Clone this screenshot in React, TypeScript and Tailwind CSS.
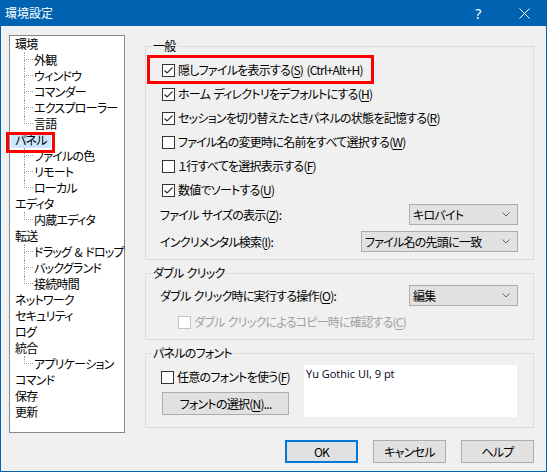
import React from 'react';

type TreeNode = { label: string; selected?: boolean; children?: string[] };

// Noto's space is much narrower than Meiryo UI's, so widen it
const sp = (s: string) => s.replace(/ /g, '\u2004');

const tree: TreeNode[] = [
  { label: '環境', children: ['外観', 'ウィンドウ', 'コマンダー', 'エクスプローラー', '言語'] },
  { label: 'パネル', selected: true, children: ['ファイルの色', 'リモート', 'ローカル'] },
  { label: 'エディタ', children: ['内蔵エディタ'] },
  { label: '転送', children: ['ドラッグ & ドロップ', 'バックグランド', '接続時間'] },
  { label: 'ネットワーク' },
  { label: 'セキュリティ' },
  { label: 'ログ' },
  { label: '統合', children: ['アプリケーション'] },
  { label: 'コマンド' },
  { label: '保存' },
  { label: '更新' },
];

function Mn({ before, k, after = '' }: { before: string; k: string; after?: string }) {
  return (
    <span className="whitespace-nowrap">
      {sp(before)}(<span className="underline underline-offset-2">{k}</span>){sp(after)}
    </span>
  );
}

function Check({ checked = false, disabled = false }: { checked?: boolean; disabled?: boolean }) {
  return (
    <span
      className={`w-[13px] h-[13px] border bg-white flex items-center justify-center shrink-0 ${
        disabled ? 'border-[#c4c4c4]' : 'border-[#333333]'
      }`}
    >
      {checked && (
        <svg width="11" height="11" viewBox="0 0 11 11">
          <path d="M1.5 5.5 L4 8 L9.5 2.5" fill="none" stroke="#333333" strokeWidth="1.2" />
        </svg>
      )}
    </span>
  );
}

function CheckRow({ checked, children }: { checked?: boolean; children: React.ReactNode }) {
  return (
    <div className="flex items-center h-[24px] gap-[3px] pl-[16px]">
      <Check checked={checked} />
      <span>{children}</span>
    </div>
  );
}

function Combo({ value, width }: { value: string; width: string }) {
  return (
    <div
      className={`${width} h-[21px] border border-[#adadad] bg-[#e1e1e1] flex items-center justify-between pl-[3px] pr-[7px]`}
    >
      <span>{value}</span>
      <svg width="8" height="5" viewBox="0 0 8 5">
        <polyline points="0.5,0.5 4,4 7.5,0.5" fill="none" stroke="#606060" strokeWidth="1" />
      </svg>
    </div>
  );
}

function Group({ title, className = '', children }: { title: string; className?: string; children: React.ReactNode }) {
  return (
    <div className={`border border-[#dcdcdc] ${className}`}>
      <div className="-mt-[9px] ml-[6px] w-fit px-[1px] leading-[16px] bg-[#f0f0f0]">{sp(title)}</div>
      {children}
    </div>
  );
}

function Button({ children, primary = false, width = 'w-[73px]' }: { children: React.ReactNode; primary?: boolean; width?: string }) {
  return (
    <div
      className={`${width} h-[23px] bg-[#e1e1e1] flex items-center justify-center ${
        primary ? 'border-2 border-[#0078d7]' : 'border border-[#adadad]'
      }`}
    >
      {children}
    </div>
  );
}

function Tree() {
  return (
    <div className="w-[116px] h-[398px] border border-[#828790] bg-white shrink-0">
      {tree.map((node) => (
        <div key={node.label}>
          <div className="h-[16px] flex items-center pl-[1px]">
            <span className={`px-[4px] leading-[16px] ${node.selected ? 'bg-[#cce8ff]' : ''}`}>{node.label}</span>
          </div>
          {node.children?.map((c, i) => {
            const last = i === node.children!.length - 1;
            return (
              <div key={c} className="h-[16px] flex">
                <div className="w-[14px] shrink-0" />
                <div className="w-[9px] shrink-0 flex flex-col">
                  <div className="h-[8px] border-l border-b border-dotted border-[#a0a0a0]" />
                  <div className={`h-[8px] ${last ? '' : 'border-l border-dotted border-[#a0a0a0]'}`} />
                </div>
                <span className="ml-[1px] leading-[16px] whitespace-nowrap">{sp(c)}</span>
              </div>
            );
          })}
        </div>
      ))}
    </div>
  );
}

export default function App() {
  return (
    <div className="relative w-[547px] h-[472px] bg-[#f0f0f0] border-x border-b border-[#0063b1] text-[12px] text-black font-['Noto_Sans_CJK_JP',sans-serif] [font-feature-settings:'palt'] tracking-[-0.75px] overflow-hidden">
      {/* title bar */}
      <div className="h-[26px] bg-[#0063b1] flex items-center text-white -mx-[1px]">
        <span className="pl-[5px] text-[12px] tracking-normal flex-1">環境設定</span>
        <div className="w-[46px] h-full flex items-center justify-center text-[14px] font-['Noto_Sans',sans-serif]">?</div>
        <div className="w-[46px] h-full flex items-center justify-center">
          <svg width="11" height="11" viewBox="0 0 11 11">
            <path d="M0.5 0.5 L10.5 10.5 M10.5 0.5 L0.5 10.5" stroke="white" strokeWidth="1" />
          </svg>
        </div>
      </div>

      <div className="flex pt-[9px] pl-[8px]">
        <Tree />

        <div className="ml-[20px] w-[389px]">
          <Group title="一般" className="mt-[11px] pb-[7px]">
            <div className="mt-[4px]">
              <CheckRow checked>
                <Mn before="隠しファイルを表示する" k="S" after=" (Ctrl+Alt+H)" />
              </CheckRow>
              <CheckRow checked>
                <Mn before="ホーム ディレクトリをデフォルトにする" k="H" />
              </CheckRow>
              <CheckRow checked>
                <Mn before="セッションを切り替えたときパネルの状態を記憶する" k="R" />
              </CheckRow>
              <CheckRow>
                <Mn before="ファイル名の変更時に名前をすべて選択する" k="W" />
              </CheckRow>
              <CheckRow>
                <Mn before="１行すべてを選択表示する" k="F" />
              </CheckRow>
              <CheckRow checked>
                <Mn before="数値でソートする" k="U" />
              </CheckRow>
            </div>
            <div className="flex items-center justify-between pl-[14px] pr-[15px] mt-[2px]">
              <Mn before="ファイル サイズの表示" k="Z" after=":" />
              <Combo value="キロバイト" width="w-[109px]" />
            </div>
            <div className="flex items-center justify-between pl-[14px] pr-[15px] mt-[6px]">
              <Mn before="インクリメンタル検索" k="I" after=":" />
              <Combo value="ファイル名の先頭に一致" width="w-[157px]" />
            </div>
          </Group>

          <Group title="ダブル クリック" className="mt-[13px] pb-[5px]">
            <div className="flex items-center justify-between pl-[14px] pr-[15px] mt-[4px]">
              <Mn before="ダブル クリック時に実行する操作" k="O" after=":" />
              <Combo value="編集" width="w-[109px]" />
            </div>
            <div className="flex items-center h-[24px] gap-[3px] pl-[32px] mt-[4px] text-[#a0a0a0]">
              <Check disabled />
              <Mn before="ダブル クリックによるコピー時に確認する" k="C" />
            </div>
          </Group>

          <Group title="パネルのフォント" className="mt-[13px] pb-[10px]">
            <div className="flex mt-[4px] pl-[15px]">
              <div className="w-[128px]">
                <div className="flex items-center h-[24px] gap-[3px]">
                  <Check />
                  <Mn before="任意のフォントを使う" k="F" />
                </div>
                <div className="mt-[3px] ml-[1px]">
                  <Button width="w-[127px]">
                    <Mn before="フォントの選択" k="N" after="..." />
                  </Button>
                </div>
              </div>
              <div className="ml-[15px] w-[213px] h-[52px] bg-white pl-[2px] pt-[1px] leading-[16px] font-['Open_Sans',sans-serif] text-[11px] tracking-normal text-[#000020]">
                Yu Gothic UI, 9 pt
              </div>
            </div>
          </Group>

          <div className="flex justify-end gap-[15px] mt-[12px]">
            <Button primary>OK</Button>
            <Button>キャンセル</Button>
            <Button>ヘルプ</Button>
          </div>
        </div>
      </div>

      {/* annotation boxes */}
      <div className="absolute left-[5px] top-[132px] w-[49px] h-[21px] border-[3px] border-[#ff0000]" />
      <div className="absolute left-[146px] top-[55px] w-[227px] h-[29px] border-[3px] border-[#ff0000]" />
    </div>
  );
}
